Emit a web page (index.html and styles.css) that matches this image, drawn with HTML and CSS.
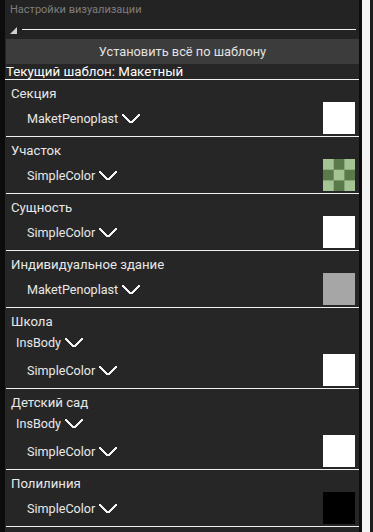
FILE: index.html
```html
<!DOCTYPE html>
<html lang="ru">
<head>
  <meta charset="UTF-8" />
  <title>Настройки визуализации</title>
  <link rel="stylesheet" href="styles.css">
</head>
<body>
  <div class="window">
    <div class="panel">
      <div class="panel-title">Настройки визуализации</div>
      <div class="fold">
        <svg class="fold-icon" width="7" height="7" viewBox="0 0 7 7"><polygon points="7,0 7,7 0,7" fill="#cfcfcf"/></svg>
        <div class="fold-line"></div>
      </div>
      <button class="apply-btn">Установить всё по шаблону</button>
      <div class="current">Текущий шаблон: Макетный</div>

      <div class="section">
        <div class="label">Секция</div>
        <div class="row">
          <div class="select">MaketPenoplast <span class="chev"></span></div>
          <div class="swatch white"></div>
        </div>
      </div>

      <div class="section">
        <div class="label">Участок</div>
        <div class="row">
          <div class="select">SimpleColor <span class="chev"></span></div>
          <div class="swatch checker"></div>
        </div>
      </div>

      <div class="section">
        <div class="label">Сущность</div>
        <div class="row">
          <div class="select">SimpleColor <span class="chev"></span></div>
          <div class="swatch white"></div>
        </div>
      </div>

      <div class="section">
        <div class="label">Индивидуальное здание</div>
        <div class="row">
          <div class="select">MaketPenoplast <span class="chev"></span></div>
          <div class="swatch gray"></div>
        </div>
      </div>

      <div class="section">
        <div class="label">Школа</div>
        <div class="sub">
          <div class="select">InsBody <span class="chev"></span></div>
        </div>
        <div class="row">
          <div class="select">SimpleColor <span class="chev"></span></div>
          <div class="swatch white"></div>
        </div>
      </div>

      <div class="section">
        <div class="label">Детский сад</div>
        <div class="sub">
          <div class="select">InsBody <span class="chev"></span></div>
        </div>
        <div class="row">
          <div class="select">SimpleColor <span class="chev"></span></div>
          <div class="swatch white"></div>
        </div>
      </div>

      <div class="section">
        <div class="label">Полилиния</div>
        <div class="row">
          <div class="select">SimpleColor <span class="chev"></span></div>
          <div class="swatch black"></div>
        </div>
      </div>
    </div>
    <div class="scrollbar"></div>
  </div>
</body>
</html>
```

FILE: styles.css
```css
html, body {
  margin: 0;
  padding: 0;
  background: #1e1e1e;
  height: 100%;
  overflow: hidden;
}

body {
  font-family: Roboto, 'Noto Sans', sans-serif;
  color: #e6e6e6;
}

.window {
  display: flex;
  height: 532px;
  border-left: 5px solid #0c0c0c;
}

.panel {
  width: 354px;
  background: #262626;
  border-right: 3px solid #0c0c0c;
}

.scrollbar {
  width: 8px;
  background: #f2f2f2;
}

.panel-title {
  height: 20px;
  line-height: 20px;
  padding-left: 5px;
  font-size: 11px;
  color: #7e7e7e;
  background: #232323;
}

.fold {
  display: flex;
  align-items: center;
  height: 19px;
  padding-left: 5px;
  background: #232323;
}

.fold-icon {
  display: block;
  margin-top: 1px;
}

.fold-line {
  height: 1px;
  background: #f0f0f0;
  margin-left: 5px;
  width: 334px;
}

.apply-btn {
  display: block;
  width: 353px;
  height: 25px;
  margin-left: 1px;
  padding: 0;
  border: none;
  background: #3c3c3c;
  color: #e2e2e2;
  font-family: Roboto, 'Noto Sans', sans-serif;
  font-size: 12.8px;
  text-align: center;
}

.current {
  height: 15px;
  line-height: 15px;
  padding-left: 1px;
  font-size: 13.3px;
  color: #ffffff;
  border-bottom: 1px solid #f0f0f0;
  width: 353px;
}

.section {
  width: 353px;
  margin-left: 1px;
  border-bottom: 1px solid #f0f0f0;
  padding-bottom: 2px;
}

.label {
  padding: 6px 0 0 5px;
  height: 16px;
  line-height: 16px;
  font-size: 13.2px;
  color: #e8e8e8;
}

.row {
  display: flex;
  align-items: center;
  justify-content: space-between;
  height: 32px;
  padding-left: 21px;
  padding-right: 4px;
}

.sub {
  display: flex;
  align-items: center;
  height: 24px;
  padding-left: 10px;
}

.select {
  display: flex;
  align-items: center;
  font-size: 12.6px;
  color: #e8e8e8;
  white-space: pre;
}

.chev {
  display: inline-block;
  width: 18px;
  height: 9px;
  margin-left: 1px;
  background:
    linear-gradient(to top right, transparent calc(50% - 1.1px), #f2f2f2 calc(50% - 1.1px), #f2f2f2 calc(50% + 1.1px), transparent calc(50% + 1.1px)) left / 50% 100% no-repeat,
    linear-gradient(to top left, transparent calc(50% - 1.1px), #f2f2f2 calc(50% - 1.1px), #f2f2f2 calc(50% + 1.1px), transparent calc(50% + 1.1px)) right / 50% 100% no-repeat;
}

.swatch {
  width: 32px;
  height: 32px;
}

.white { background: #ffffff; }
.gray { background: #a6a6a6; }
.black { background: #000000; }

.checker {
  background:
    conic-gradient(#5b7a4b 25%, #a5c494 0 50%, #5b7a4b 0 75%, #a5c494 0) 0 0 / 21.4px 21.4px;
}
```
